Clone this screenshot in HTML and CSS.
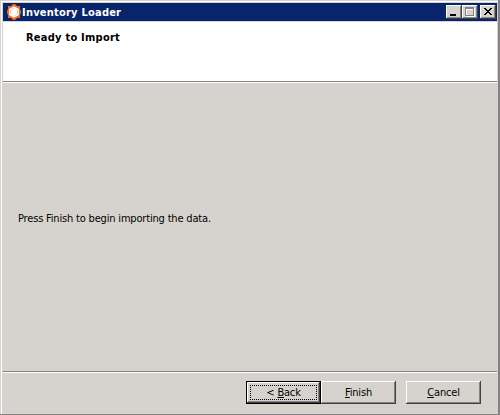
FILE: index.html
```html
<!DOCTYPE html>
<html lang="en">
<head>
<meta charset="utf-8">
<title>Inventory Loader</title>
<link rel="stylesheet" href="styles.css">
</head>
<body>
<div class="window">
  <header class="titlebar">
    <svg class="logo" width="16" height="16" viewBox="0 0 16 16">
      <path d="M7 0H9L11 2H14V5L15 7V9L14 11V14H11L9 16H7L5 14H2V11L1 9V7L2 5V2H5Z" fill="#f7651c"/>
      <path d="M8 2.2L13 5V11L8 13.8L3 11V5Z" fill="#fff"/>
      <path d="M4.5 10V6L8 4M11.5 6V10L8 12" fill="none" stroke="#f9a477" stroke-width=".6"/>
    </svg>
    <span class="title">Inventory Loader</span>
    <div class="controls">
      <button class="control" aria-label="Minimize"><svg width="16" height="14" shape-rendering="crispEdges"><path d="M4 9h6v2H4z"/></svg></button>
      <button class="control" aria-label="Maximize"><svg width="16" height="14" shape-rendering="crispEdges"><path d="M4 3h9v9H4z" fill="#fff"/><path d="M3 2h9v9H3z" fill="#848284"/><path d="M4 4h7v6H4z" fill="#d6d3ce"/><path d="M4 4h7v1H5v5H4z" fill="#fff"/></svg></button>
      <button class="control close" aria-label="Close"><svg width="16" height="14" shape-rendering="crispEdges"><path d="M4 3h2v1h1v1h2V4h1V3h2v1h-1v1h-1v1H9v1h1v1h1v1h1v1h-2V9H9V8H7v1H6v1H4V9h1V8h1V7h1V6H6V5H5V4H4z"/></svg></button>
    </div>
  </header>
  <section class="heading"><h1>Ready to Import</h1></section>
  <main class="page"><p>Press Finish to begin importing the data.</p></main>
  <footer class="actions">
    <button class="button default"><span class="focus"><span class="label">&lt; <u>B</u>ack</span></span></button>
    <button class="button"><span class="label"><u>F</u>inish</span></button>
    <button class="button cancel"><span class="label"><u>C</u>ancel</span></button>
  </footer>
</div>
</body>
</html>
```
FILE: styles.css
```css
* { box-sizing: border-box; }
body {
  margin: 0;
  background: #d6d3ce;
  font: 11px/13px "DejaVu Sans Condensed", "DejaVu Sans", sans-serif;
  font-stretch: condensed;
  letter-spacing: -0.18px;
  color: #000;
}
.window {
  width: 500px;
  height: 415px;
  padding: 1px 0 0 1px;
  display: flex;
  flex-direction: column;
  border: solid #848284;
  border-width: 0 2px 1px 0;
  background: linear-gradient(#fff, #fff) 1px 1px / 100% 1px no-repeat, linear-gradient(#fff, #fff) 1px 1px / 1px 100% no-repeat, #d6d3ce;
}
.titlebar {
  height: 18px;
  flex: none;
  margin: 2px 1px 1px 2px;
  padding: 0 1px 0 3px;
  display: flex;
  align-items: center;
  background: #08246b;
}
.logo { flex: none; }
.title {
  flex: 1;
  color: #fff;
  font-weight: bold;
  letter-spacing: 0.22px;
  white-space: nowrap;
}
.controls { display: flex; }
.control {
  width: 16px;
  height: 14px;
  padding: 0;
  border: 0;
  background: #d6d3ce;
  box-shadow: inset -1px -1px #424142, inset 1px 1px #fff, inset -2px -2px #848284;
}
.control svg { display: block; }
.close { margin-left: 2px; }
.heading {
  height: 59px;
  flex: none;
  margin: 0 1px 0 2px;
  padding: 9px 0 0 23px;
  background: #fff;
}
h1 { margin: 0; font-size: 11px; line-height: 13px; letter-spacing: 0.24px; }
.page {
  flex: 1;
  margin: 0 1px 0 2px;
  padding: 0 0 16px 15px;
  display: flex;
  align-items: center;
  border-top: 1px solid #848284;
  border-bottom: 1px solid #848284;
  box-shadow: inset 0 1px #fff, 0 1px #fff;
}
p { margin: 0; white-space: nowrap; }
.actions {
  height: 42px;
  flex: none;
  padding: 9px 17px 0 0;
  display: flex;
  justify-content: flex-end;
}
.button {
  width: 75px;
  height: 23px;
  padding: 0;
  border: 0;
  background: #d6d3ce;
  font: inherit;
  letter-spacing: inherit;
  box-shadow: inset -1px -1px #424142, inset 1px 1px #fff, inset -2px -2px #848284;
}
.default {
  padding: 4px;
  border: 1px solid #000;
}
.focus {
  display: block;
  height: 15px;
  margin: -1px;
  border: 1px dotted #000;
  line-height: 14px;
}
.cancel { margin-left: 10px; }
.label { white-space: nowrap; }
```
